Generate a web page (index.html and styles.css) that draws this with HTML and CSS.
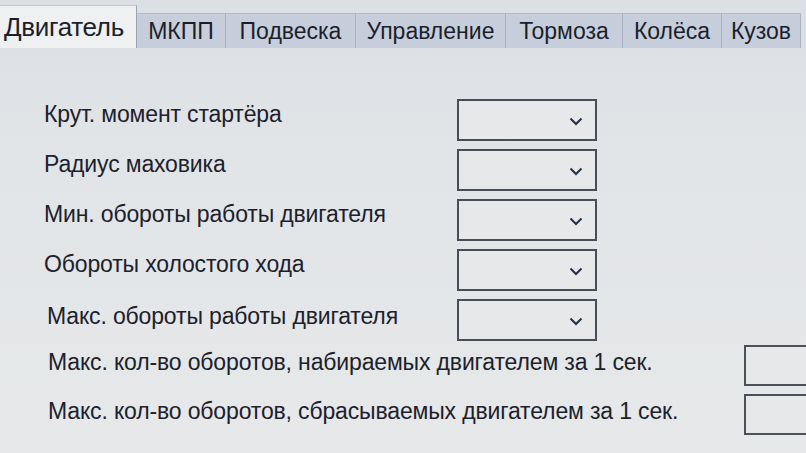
FILE: index.html
```html
<!DOCTYPE html>
<html lang="ru">
<head>
<meta charset="utf-8">
<title>Двигатель</title>
<link rel="stylesheet" href="styles.css">
</head>
<body>
<div class="window">
  <div class="tabs">
    <div class="tab active t1">Двигатель</div>
    <div class="tab t2">МКПП</div>
    <div class="tab t3">Подвеска</div>
    <div class="tab t4">Управление</div>
    <div class="tab t5">Тормоза</div>
    <div class="tab t6">Колёса</div>
    <div class="tab t7">Кузов</div>
  </div>
  <div class="panel">
    <div class="row">
      <span class="label">Крут. момент стартёра</span>
      <div class="combo"><svg class="chev" width="14" height="9" viewBox="0 0 14 9"><polyline points="1.5,1.5 7,7 12.5,1.5" fill="none" stroke="#273048" stroke-width="2"/></svg></div>
    </div>
    <div class="row">
      <span class="label">Радиус маховика</span>
      <div class="combo"><svg class="chev" width="14" height="9" viewBox="0 0 14 9"><polyline points="1.5,1.5 7,7 12.5,1.5" fill="none" stroke="#273048" stroke-width="2"/></svg></div>
    </div>
    <div class="row">
      <span class="label">Мин. обороты работы двигателя</span>
      <div class="combo"><svg class="chev" width="14" height="9" viewBox="0 0 14 9"><polyline points="1.5,1.5 7,7 12.5,1.5" fill="none" stroke="#273048" stroke-width="2"/></svg></div>
    </div>
    <div class="row">
      <span class="label">Обороты холостого хода</span>
      <div class="combo"><svg class="chev" width="14" height="9" viewBox="0 0 14 9"><polyline points="1.5,1.5 7,7 12.5,1.5" fill="none" stroke="#273048" stroke-width="2"/></svg></div>
    </div>
    <div class="row">
      <span class="label shift">Макс. обороты работы двигателя</span>
      <div class="combo"><svg class="chev" width="14" height="9" viewBox="0 0 14 9"><polyline points="1.5,1.5 7,7 12.5,1.5" fill="none" stroke="#273048" stroke-width="2"/></svg></div>
    </div>
    <div class="row wide first-wide">
      <span class="label">Макс. кол-во оборотов, набираемых двигателем за 1 сек.</span>
      <div class="field"></div>
    </div>
    <div class="row wide">
      <span class="label">Макс. кол-во оборотов, сбрасываемых двигателем за 1 сек.</span>
      <div class="field"></div>
    </div>
  </div>
</div>
</body>
</html>
```

FILE: styles.css
```css
html, body {
  margin: 0;
  padding: 0;
  width: 806px;
  height: 453px;
  overflow: hidden;
}

body {
  background: #e3e5e7;
  font-family: "Liberation Sans", Arial, sans-serif;
  color: #1c212c;
}

.window {
  width: 806px;
  height: 453px;
  display: flex;
  flex-direction: column;
  background: linear-gradient(180deg, #dadde2 0px, #e1e4e7 120px, #e6e8e9 453px);
}

.tabs {
  height: 48px;
  display: flex;
  align-items: flex-end;
  background: #dcdfe4;
  flex: none;
}

.tab {
  height: 35px;
  box-sizing: border-box;
  background: #c7cedb;
  border-right: 1px solid #a9b1c2;
  border-top: 1px solid #b3bbcb;
  font-size: 23px;
  line-height: 34px;
  text-align: center;
  color: #1a1f2b;
  flex: none;
}

.tab.active {
  height: 43px;
  background: #eef0f1;
  border-top: 1px solid #c2c8d2;
  border-right: 1px solid #9aa2b2;
  text-align: left;
  padding-left: 4px;
  line-height: 42px;
  font-size: 26px;
  letter-spacing: -0.3px;
}

.t1 { width: 137px; }
.t2 { width: 89px; }
.t3 { width: 130px; }
.t4 { width: 150px; }
.t5 { width: 117px; }
.t6 { width: 99px; }
.t7 { width: 79px; }

.panel {
  padding-top: 51px;
  padding-left: 44px;
  display: flex;
  flex-direction: column;
  gap: 8px;
}

.row {
  display: flex;
  align-items: center;
  height: 42px;
  width: 553px;
}

.label {
  flex: 1;
  font-size: 23px;
  letter-spacing: -0.15px;
  padding-bottom: 12px;
  white-space: nowrap;
}

.label.shift {
  padding-left: 3px;
  padding-bottom: 8px;
}

.combo {
  width: 140px;
  height: 42px;
  box-sizing: border-box;
  border: 2px solid #484d5a;
  background: #e6e8ea;
  display: flex;
  align-items: center;
  justify-content: flex-end;
  padding-right: 12px;
  padding-top: 3px;
  flex: none;
}

.chev {
  display: block;
}

.row.wide {
  width: 770px;
  height: 41px;
}

.row.first-wide {
  margin-top: -4px;
}

.row.wide .label {
  padding-left: 4px;
  padding-bottom: 6px;
}

.field {
  width: 70px;
  height: 41px;
  box-sizing: border-box;
  border: 2px solid #4c505c;
  border-right: none;
  background: #e6e8ea;
  flex: none;
}
```
